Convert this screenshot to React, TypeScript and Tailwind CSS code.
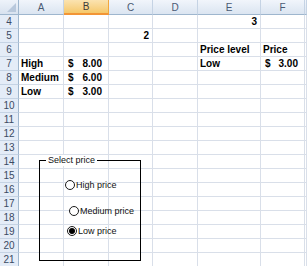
import { FC } from "react";

const cols = ["A", "B", "C", "D", "E", "F", ""];

type Cell = { text?: string; align?: "left" | "right"; money?: string };

const data: Record<number, Record<string, Cell>> = {
  4: { E: { text: "3", align: "right" } },
  5: { C: { text: "2", align: "right" } },
  6: { E: { text: "Price level" }, F: { text: "Price" } },
  7: { A: { text: "High" }, B: { money: "8.00" }, E: { text: "Low" }, F: { money: "3.00" } },
  8: { A: { text: "Medium" }, B: { money: "6.00" } },
  9: { A: { text: "Low" }, B: { money: "3.00" } },
};

const rows = Array.from({ length: 18 }, (_, i) => i + 4);

const Radio: FC<{ checked?: boolean; label: string; className: string }> = ({ checked, label, className }) => (
  <div className={`absolute flex items-center gap-[1px] ${className}`}>
    <span className="flex h-[10px] w-[10px] items-center justify-center rounded-full border border-[#1a1a1a] bg-white">
      {checked && <span className="h-[6px] w-[6px] rounded-full bg-black" />}
    </span>
    <span className="text-[9px] leading-none text-[#111]">{label}</span>
  </div>
);

const CellView: FC<{ cell?: Cell }> = ({ cell }) => {
  if (!cell) return null;
  if (cell.money)
    return (
      <div className="flex h-full items-center justify-between pl-[4px] pr-[6px]">
        <span>$</span>
        <span>{cell.money}</span>
      </div>
    );
  return (
    <div
      className={`flex h-full items-center px-[2px] ${cell.align === "right" ? "justify-end pr-[3px]" : "justify-start"}`}
    >
      {cell.text}
    </div>
  );
};

const App: FC = () => {
  return (
    <div className="relative h-[266px] w-[307px] overflow-hidden bg-white font-['Liberation_Sans',Arial,sans-serif]">
      <div className="grid grid-cols-[19px_45px_45px_44px_45px_63px_44px_1fr] grid-rows-[15px] auto-rows-[14px] text-[10px] font-bold text-black">
        {/* header row */}
        <div className="relative border-r border-b border-[#9eb6ce] bg-gradient-to-b from-[#eef3fa] to-[#d8e2ef]">
          <svg className="absolute right-[2px] bottom-[2px]" width="9" height="9" viewBox="0 0 9 9">
            <polygon points="9,0 9,9 0,9" fill="#b8c8dc" />
          </svg>
        </div>
        {cols.map((c) => (
          <div
            key={c || "x"}
            className={`flex items-center justify-center border-r text-[10px] font-normal ${
              c === "B"
                ? "border-b-2 border-r-[#f2a73d] border-b-[#f29536] bg-gradient-to-b from-[#fbe3b0] to-[#f5c869] text-[#3b3b3b]"
                : "border-b border-r-[#c5d3e4] border-b-[#9eb6ce] bg-gradient-to-b from-[#f1f5fb] to-[#dbe5f1] text-[#4a5a73]"
            }`}
          >
            {c}
          </div>
        ))}

        {rows.map((r) => (
          <>
            <div
              key={`h${r}`}
              className="flex items-center justify-center border-r border-b border-r-[#9eb6ce] border-b-[#c5d3e4] bg-[#e4ecf7] text-[10px] font-normal text-[#3b4a63]"
            >
              {r}
            </div>
            {cols.map((c) => (
              <div key={`${r}${c}`} className="border-r border-b border-[#d9dfe9] overflow-visible whitespace-nowrap">
                <CellView cell={c ? data[r]?.[c] : undefined} />
              </div>
            ))}
          </>
        ))}
      </div>

      {/* form control group box */}
      <div className="absolute left-[39px] top-[160px] h-[101px] w-[102px] border border-black">
        <span className="absolute left-[6px] top-[-6px] bg-white px-[2px] text-[9px] leading-[11px] text-[#111]">
          Select price
        </span>
      </div>
      <Radio className="left-[65px] top-[180px]" label="High price" />
      <Radio className="left-[69px] top-[206px]" label="Medium price" />
      <Radio className="left-[67px] top-[226px]" label="Low price" checked />
    </div>
  );
};

export default App;
